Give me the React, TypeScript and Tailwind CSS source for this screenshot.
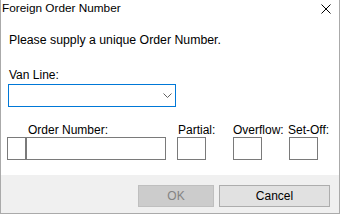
// Foreign Order Number dialog — classic Win32 look

const FONT = "font-['Liberation_Sans',Arial,sans-serif]"

function Box({ className = '' }: { className?: string }) {
  return <div className={`h-[23px] border border-[#7a7a7a] bg-white ${className}`} />
}

export default function App() {
  return (
    <div
      className={`${FONT} flex h-[214px] w-[340px] flex-col border-x border-b border-[#aaaaaa] bg-white text-[12px] leading-[14px] text-black`}
    >
      {/* title bar */}
      <div className="flex h-[33px] items-start justify-between pl-[1px] pr-[8px] pt-[1px]">
        <span className="text-[11.8px]">Foreign Order Number</span>
        <svg width="10" height="10" viewBox="0 0 10 10" className="mt-[3px]">
          <path d="M0.5 0.5 L9.5 9.5 M9.5 0.5 L0.5 9.5" stroke="#000" strokeWidth="1" />
        </svg>
      </div>

      <p className="pl-[8px] text-[12.3px]">Please supply a unique Order Number.</p>

      {/* van line */}
      <div className="mt-[21px] pl-[7px]">
        <div className="pl-[1px]">Van Line:</div>
        <div className="mt-[2px] flex h-[23px] w-[168px] items-center justify-end border border-[#0078d7] bg-white pr-[3px]">
          <svg width="9" height="5" viewBox="0 0 9 5">
            <polyline points="0.5,0.5 4.5,4.5 8.5,0.5" fill="none" stroke="#606060" strokeWidth="1" />
          </svg>
        </div>
      </div>

      {/* order number row */}
      <div className="mt-[16px] flex pl-[6px]">
        <div className="flex flex-col">
          <div className="pl-[21px]">Order Number:</div>
          <div className="flex">
            <Box className="w-[19px]" />
            <Box className="w-[140px]" />
          </div>
        </div>
        <div className="ml-[11px] flex w-[29px] flex-col">
          <div className="whitespace-nowrap pl-[1px]">Partial:</div>
          <Box className="w-[29px]" />
        </div>
        <div className="ml-[27px] flex w-[29px] flex-col">
          <div className="whitespace-nowrap">Overflow:</div>
          <Box className="w-[29px]" />
        </div>
        <div className="ml-[27px] flex w-[29px] flex-col">
          <div className="-ml-[1px] whitespace-nowrap">Set-Off:</div>
          <Box className="w-[29px]" />
        </div>
      </div>

      {/* footer */}
      <div className="mt-auto flex h-[38px] items-start justify-end gap-[5px] bg-[#f0f0f0] pr-[9px] pt-[10px]">
        <button
          disabled
          className="flex h-[22px] w-[76px] items-center justify-center border border-[#bfbfbf] bg-[#cccccc] text-[#838383]"
        >
          OK
        </button>
        <button className="flex h-[22px] w-[111px] items-center justify-center border border-[#adadad] bg-[#e1e1e1] text-black">
          Cancel
        </button>
      </div>
    </div>
  )
}
